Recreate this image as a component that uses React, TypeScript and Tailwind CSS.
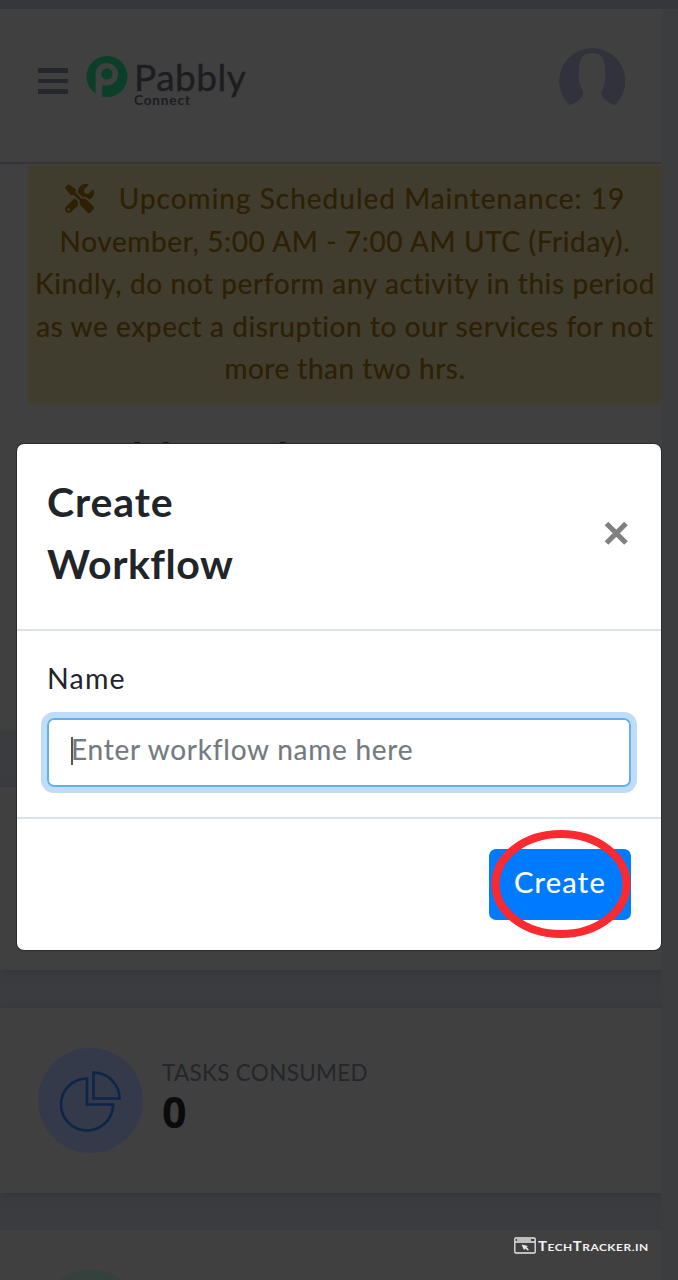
import type { ReactNode } from "react";
import { FaTools } from "react-icons/fa";

function Logo() {
  return (
    <div className="flex items-start">
      <svg width="42" height="42" viewBox="0 0 42 42" className="mt-px shrink-0">
        <circle cx="21" cy="20.5" r="20.5" fill="#0b3f2a" />
        <path
          d="M9.5 40V19.5A11.3 11.3 0 1 1 20.800 29.500H16.200V40"
          fill="#404040"
        />
        <circle cx="21" cy="18" r="5.600" fill="#0b3f2a" />
      </svg>
      <div className="ml-[6px] flex flex-col text-[#1d1d20]">
        <span className="h-[38px] whitespace-nowrap font-[Lato] text-[37px] leading-[43px] tracking-[0.5px] [-webkit-text-stroke:0.4px_#1d1d20]">
          Pabbly
        </span>
        <span className="h-[14px] whitespace-nowrap font-[Lato] text-[13.5px] font-bold leading-[15px] tracking-[0.9px]">
          Connect
        </span>
      </div>
    </div>
  );
}

function Avatar() {
  return (
    <svg width="66" height="66" viewBox="0 0 66 66">
      <path
        d="M10.500 57A33 33 0 1 1 56 57C48 54 42 50 42.500 44C45 39 46 36 46.300 30C46.500 16 46 5 33 5C20 5 19.500 16 19.800 30C20 36 22 39 24 44C24 50 19 54 10.500 57Z"
        fill="#31323b"
      />
    </svg>
  );
}

function Line({ className, children }: { className: string; children: ReactNode }) {
  return <div className={`flex h-[42.5px] items-center justify-center whitespace-nowrap ${className}`}>{children}</div>;
}

function PieIcon() {
  return (
    <svg width="62" height="62" viewBox="0 0 62 62" fill="none" stroke="#0d2547" strokeWidth="2.600">
      <path d="M27 8.500V34.500H53A26 26 0 1 1 27 8.500Z" />
      <path d="M33.500 2.500V28.500H59.500A26 26 0 0 0 33.500 2.500Z" />
    </svg>
  );
}

function Modal() {
  return (
    <div className="absolute left-[17px] top-[444px] flex h-[506px] w-[644px] flex-col rounded-[7px] bg-white shadow-[0_0_0_1px_#2c2c2c]">
      <div className="flex h-[187px] items-start justify-between border-b-2 border-[#d9e3ea] pl-[30px] pr-[32px] pt-[27px]">
        <h2 className="w-[260px] font-[Lato] text-[41px] font-bold leading-[62px] text-[#212529]">
          <span className="block tracking-[0.9px]">Create</span>
          <span className="block tracking-[0.5px]">Workflow</span>
        </h2>
        <svg width="25" height="25" viewBox="0 0 25 25" className="mt-[50px]">
          <path d="M2.500 2.500L22 22M22 2.500L2.500 22" stroke="#808080" strokeWidth="5.200" />
        </svg>
      </div>
      <div className="flex h-[188px] flex-col border-b-2 border-[#d9e3ea] px-[30px] pt-[26px]">
        <label className="h-[61px] font-[Lato] text-[28.5px] leading-[42px] tracking-[1.2px] text-[#212529]">Name</label>
        <div className="flex h-[69px] items-center rounded-[7px] border-2 border-[#62b0ec] pl-[22px] pb-[7px] shadow-[0_0_0_6px_#bfddf9]">
          <span className="relative font-[Lato] text-[28px] tracking-[0.75px] text-[#737a80] [-webkit-text-stroke:0.15px_#737a80]">
            Enter workflow name here
            <span className="absolute left-0 top-[9px] h-[28px] w-[2px] bg-[#50565c]" />
          </span>
        </div>
      </div>
      <div className="flex justify-end pr-[30px] pt-[30px]">
        <div className="relative flex h-[71px] w-[142px] items-center justify-center rounded-[7px] bg-[#007bff] pb-[6px] font-[Lato] text-[29px] tracking-[1.3px] text-white [-webkit-text-stroke:0.2px_#fff]">
          Create
          <svg width="140" height="110" viewBox="0 0 140 110" className="absolute left-[2px] top-[-20px]">
            <ellipse cx="70" cy="55" rx="65.500" ry="50" fill="none" stroke="#fb2a31" strokeWidth="8" />
          </svg>
        </div>
      </div>
    </div>
  );
}

function Watermark() {
  return (
    <div className="absolute left-[514px] top-[1236px] flex items-center text-[#f2f2f2]">
      <svg width="22" height="17" viewBox="0 0 22 17" fill="none" stroke="#e8e8e8" strokeWidth="1.300">
        <rect x="0.800" y="1" width="20.400" height="15" rx="1" />
        <path d="M1 5H21M3 3H17" />
        <path d="M7.500 7.500L14 9L12.500 10L15 13L13.500 13.500L11.500 11.500L10 13Z" fill="#e8e8e8" stroke="none" />
      </svg>
      <span className="ml-[2px] origin-left scale-x-[1.19] whitespace-nowrap pt-[3px] font-[Lato] text-[10px] font-bold leading-[16px] tracking-[0.45px]">
        <span className="text-[12.5px]">T</span>ECH<span className="text-[12.5px]">T</span>RACKER.IN
      </span>
    </div>
  );
}

export default function App() {
  return (
    <div className="relative flex h-[1280px] w-[678px] overflow-hidden bg-[#3b3c40]">
      <div className="flex w-[662px] flex-col">
        <div className="h-[9px] w-[678px] shrink-0 bg-[#35373c]" />
        <header className="flex h-[155px] shrink-0 items-start justify-between border-b-2 border-[#34353d] bg-[#404040] pl-[38px] pr-[37px]">
          <div className="flex">
            <div className="mt-[59px] flex w-[30px] flex-col gap-[6px]">
              <div className="h-[4.5px] bg-[#25272c]" />
              <div className="h-[4.5px] bg-[#25272c]" />
              <div className="h-[4.5px] bg-[#25272c]" />
            </div>
            <div className="ml-[18px] mt-[46px]">
              <Logo />
            </div>
          </div>
          <div className="mt-[39px]">
            <Avatar />
          </div>
        </header>
        <main className="h-[567px] shrink-0 bg-[#404040]">
          <div className="ml-[28px] mt-px h-[240px] rounded-[6px] border-2 border-[#423e2b] bg-[#403d2f] pt-[10px] font-[Lato] text-[28px] text-[#2d2003] [-webkit-text-stroke:0.2px_#2d2003]">
            <Line className="tracking-[1px]">
              <FaTools className="mr-[25px] size-[29px]" />
              Upcoming Scheduled Maintenance: 19
            </Line>
            <Line className="tracking-[0.62px]">November, 5:00 AM - 7:00 AM UTC (Friday).</Line>
            <Line className="tracking-[0.6px]">Kindly, do not perform any activity in this period</Line>
            <Line className="tracking-[0.6px]">as we expect a disruption to our services for not</Line>
            <Line className="tracking-[0.5px]">more than two hrs.</Line>
          </div>
          <h1 className="ml-[46px] mt-[25px] font-[Lato] text-[47px] font-bold leading-[60px] tracking-[1.9px] text-[#111111]">
            Dashboard
          </h1>
        </main>
        <section className="mt-[56px] h-[183px] shrink-0 bg-[#404040] shadow-[0_2px_8px_#333438]" />
        <section className="mt-[38px] flex h-[185px] shrink-0 bg-[#404040] pl-[38px] pt-[40px] shadow-[0_2px_8px_#333438]">
          <div className="flex size-[105px] items-center justify-center rounded-full bg-[#343a49]">
            <PieIcon />
          </div>
          <div className="ml-[19px] flex flex-col pt-[9px] font-[Lato]">
            <span className="text-[22.5px] leading-[32px] tracking-[0.3px] text-[#252629]">TASKS CONSUMED</span>
            <span className="font-['Open_Sans'] text-[43px] font-bold leading-[45px] text-[#0b0b0c]">0</span>
          </div>
        </section>
        <section className="mt-[37px] h-[90px] shrink-0 bg-[#404040] pl-[38px] pt-[40px]">
          <div className="size-[105px] rounded-full bg-[#34423d]" />
        </section>
      </div>
      <div className="mt-[9px] grow bg-[#3b3d3f]" />
      <Modal />
      <Watermark />
    </div>
  );
}
